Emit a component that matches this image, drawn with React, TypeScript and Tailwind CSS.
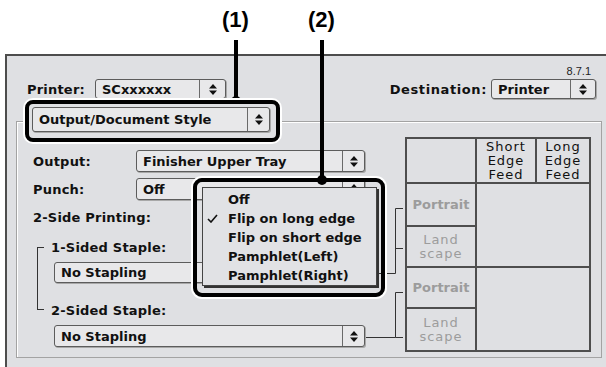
import type { ReactNode } from "react"

function UpDown() {
    return (
        <svg width="8" height="11" viewBox="0 0 8 11" className="block">
            <path d="M4 0 L8 4.5 L0 4.5 Z M0 6.5 L8 6.5 L4 11 Z" fill="#111" />
        </svg>
    )
}

function Check() {
    return (
        <svg width="11" height="9" viewBox="0 0 11 9" className="block">
            <path d="M1 5 L4 8 L10 1" stroke="#111" strokeWidth="1.6" fill="none" />
        </svg>
    )
}

function Popup({ text, className, arrow = "w-[22px]" }: { text: ReactNode; className: string; arrow?: string }) {
    return (
        <div className={`flex shrink-0 items-stretch rounded-[3px] border border-[#5c5c5c] bg-[#e8e8ea] shadow-[1px_1px_0_#a8a8a8] ${className}`}>
            <div className="flex flex-1 items-center overflow-hidden whitespace-nowrap pl-[6px] text-[13px] font-bold leading-none text-[#111]">
                {text}
            </div>
            <div className={`flex items-center justify-center border-l border-[#6a6a6a] ${arrow}`}>
                <UpDown />
            </div>
        </div>
    )
}

function Label({ children, className = "" }: { children: ReactNode; className?: string }) {
    return <div className={`whitespace-nowrap text-[13px] font-bold leading-none tracking-[0.2px] text-[#111] ${className}`}>{children}</div>
}

function FeedTable() {
    const line = "border-[#4e4e4e]"
    const head = "flex flex-col items-center justify-center text-[13px] leading-[14px] tracking-[1px] text-[#111]"
    const gray = "flex items-center justify-center text-[#9c9c9c]"
    return (
        <div className={`grid h-[215px] w-[186px] shrink-0 grid-cols-[70px_60px_52px] grid-rows-[45px_43px_41px_41px_41px] border-2 ${line}`}>
            <div className={`border-b-2 border-r-2 ${line}`} />
            <div className={`border-b-2 border-r-2 ${line} ${head}`}>
                <span>Short</span>
                <span>Edge</span>
                <span>Feed</span>
            </div>
            <div className={`border-b-2 ${line} ${head}`}>
                <span>Long</span>
                <span>Edge</span>
                <span>Feed</span>
            </div>
            <div className={`border-b-2 border-r-2 ${line} ${gray} text-[13px] font-bold`}>Portrait</div>
            <div className={`col-span-2 row-span-2 border-b-2 ${line}`} />
            <div className={`border-b-2 border-r-2 ${line} ${gray} flex-col text-[13px] leading-[14px] tracking-[1px]`}>
                <span>Land</span>
                <span>scape</span>
            </div>
            <div className={`border-b-2 border-r-2 ${line} ${gray} text-[13px] font-bold`}>Portrait</div>
            <div className="col-span-2 row-span-2" />
            <div className={`border-r-2 ${line} ${gray} flex-col text-[13px] leading-[14px] tracking-[1px]`}>
                <span>Land</span>
                <span>scape</span>
            </div>
        </div>
    )
}

const menuItems = ["Off", "Flip on long edge", "Flip on short edge", "Pamphlet(Left)", "Pamphlet(Right)"]

export default function App() {
    return (
        <div className="relative h-[367px] w-[606px] overflow-hidden bg-white font-['DejaVu_Sans',sans-serif]">
            {/* dialog window */}
            <div className="ml-[5px] mt-[54px] h-[313px] border-l-2 border-t-2 border-[#4d4d4d] bg-[#dfe0e3] pt-[9px]">
                <div className="h-[12px] pr-[15px] text-right font-['Liberation_Sans',sans-serif] text-[11px] leading-[12px] text-[#222]">
                    8.7.1
                </div>

                <div className="mt-[2px] flex h-[20px] items-center pl-[20px] pr-[10px]">
                    <Label className="w-[68px]">Printer:</Label>
                    <Popup text="SCxxxxxx" className="h-[20px] w-[131px]" arrow="w-[26px]" />
                    <div className="flex-1" />
                    <Label className="mr-[4px] tracking-[0.6px]">Destination:</Label>
                    <Popup text="Printer" className="h-[20px] w-[105px]" arrow="w-[25px]" />
                </div>

                <div className="relative ml-[9px] mr-[4px] mt-[22px] h-[237px] border border-[#a3a3a3] shadow-[inset_1px_1px_0_#fff]">
                    {/* callout (1) around the panel menu */}
                    <div className="absolute -top-[22px] left-[8px] z-10 h-[42px] w-[255px] rounded-[8px] border-4 border-black bg-[#dfe0e3] ring-2 ring-white">
                        <Popup text="Output/Document Style" className="ml-[3px] mt-[3px] h-[25px] w-[238px]" />
                    </div>

                    <div className="flex pl-[16px] pr-[10px] pt-[15px]">
                        <div className="mt-[13px] flex-1">
                            <div className="flex h-[22px] items-center">
                                <Label className="w-[103px]">Output:</Label>
                                <Popup text="Finisher Upper Tray" className="h-[22px] w-[229px]" />
                            </div>
                            <div className="mt-[6px] flex h-[22px] items-center">
                                <Label className="w-[103px]">Punch:</Label>
                                <Popup text="Off" className="h-[22px] w-[229px]" />
                            </div>
                            <div className="mt-[9px] flex h-[16px] items-center">
                                <Label>2-Side Printing:</Label>
                            </div>
                            <div className="relative mt-[14px]">
                                <div className="absolute left-[4px] top-[8px] h-[63px] w-[7px] border-b border-l border-t border-[#333]" />
                                <div className="flex h-[16px] items-center pl-[18px]">
                                    <Label>1-Sided Staple:</Label>
                                </div>
                                <Popup text="No Stapling" className="ml-[21px] mt-[7px] h-[21px] w-[311px]" />
                                <div className="mt-[19px] flex h-[16px] items-center pl-[18px]">
                                    <Label>2-Sided Staple:</Label>
                                </div>
                                <Popup text="No Stapling" className="ml-[21px] mt-[7px] h-[22px] w-[311px]" />
                            </div>
                        </div>
                        <FeedTable />
                    </div>
                </div>
            </div>

            {/* connector brackets to the feed table */}
            <svg className="pointer-events-none absolute left-0 top-0" width="606" height="367">
                <g stroke="#333" strokeWidth="1" fill="none">
                    <path d="M403 208.5 H395.5 V273.5 H365 M395.5 248.5 H403" />
                    <path d="M403 292.5 H395.5 V337.5 H366 M395.5 337.5 H403" />
                </g>
            </svg>

            {/* callout (2) around the open menu */}
            <div className="absolute left-[193px] top-[178px] h-[119px] w-[192px] rounded-[9px] border-4 border-black ring-2 ring-white">
                <div className="ml-[5px] mt-[5px] h-[99px] w-[175px] border border-[#444] bg-[#e1e2e5] pt-[2px] shadow-[2px_2px_0_#333]">
                    {menuItems.map((item, i) => (
                        <div key={item} className="flex h-[19px] items-center text-[13px] font-bold leading-none text-[#111]">
                            <span className="w-[25px] pl-[4px]">{i === 1 ? <Check /> : null}</span>
                            <span className="whitespace-nowrap">{item}</span>
                        </div>
                    ))}
                </div>
            </div>

            {/* callout markers */}
            <div className="absolute left-[222px] top-[9px] font-['Liberation_Sans',sans-serif] text-[22px] font-bold leading-none text-black">(1)</div>
            <div className="absolute left-[308px] top-[9px] font-['Liberation_Sans',sans-serif] text-[22px] font-bold leading-none text-black">(2)</div>
            <div className="absolute left-[234px] top-[40px] h-[61px] w-[4px] bg-black" />
            <div className="absolute left-[231px] top-[96px] h-[10px] w-[10px] rounded-full bg-black" />
            <div className="absolute left-[320px] top-[40px] h-[140px] w-[4px] bg-black" />
            <div className="absolute left-[317px] top-[175px] h-[10px] w-[10px] rounded-full bg-black" />
        </div>
    )
}
